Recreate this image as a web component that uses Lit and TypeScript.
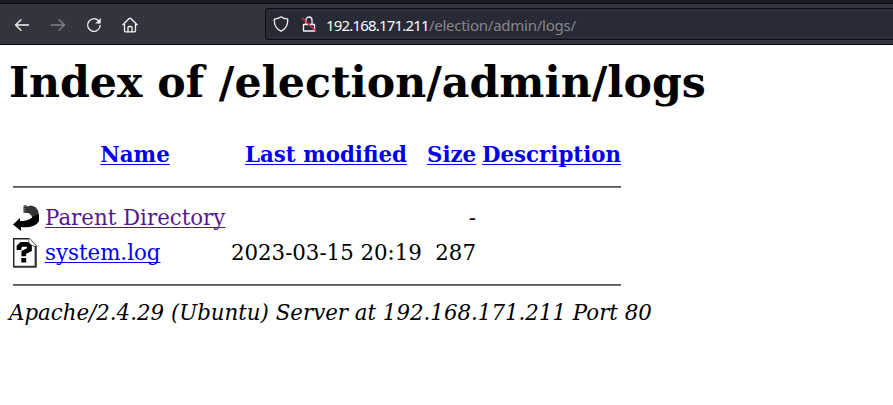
import { LitElement, html, css, svg } from "lit";
import { customElement } from "lit/decorators.js";

@customElement("browser-toolbar")
class BrowserToolbar extends LitElement {
  static styles = css`
    :host { display: block; }
    .tabs { height: 3px; background: #1a1b20; border-bottom: 1px solid #0c0d10; }
    .bar { height: 40px; display: flex; align-items: center; background: #33353d; border-bottom: 1px solid #0c0d10; }
    .nav { display: flex; gap: 20px; padding: 1px 0 0 14px; width: 265px; box-sizing: border-box; flex: none; }
    svg { display: block; flex: none; width: 16px; height: 16px; fill: none; stroke: #f4f4f6; stroke-width: 1.3; stroke-linecap: round; stroke-linejoin: round; }
    .dim { opacity: 0.4; }
    .url { flex: 1; height: 30px; display: flex; align-items: center; background: #282a35; border: 1px solid #0c0d10; border-right: 0; border-radius: 4px 0 0 4px; color: #85868e; font: 15px/28px "Noto Sans", sans-serif; letter-spacing: -0.25px; padding-left: 7px; }
    .lock { margin: 0 9px 0 12px; }
    b { font-weight: 400; color: #fbfbfe; letter-spacing: -0.81px; }
    .text { white-space: nowrap; padding-top: 2px; }
  `;
  render() {
    return html`
      <div class="tabs"></div>
      <div class="bar">
        <div class="nav">
          <svg viewBox="0 0 16 16"><path d="M14.5 8H1.5M7 2.8L1.5 8L7 13.2" /></svg>
          <svg class="dim" viewBox="0 0 16 16"><path d="M1.5 8H14.5M9 2.8L14.5 8L9 13.2" /></svg>
          <svg viewBox="0 0 16 16"><path d="M12.3 3.5A6.3 6.3 0 1 0 14.2 8.5" /><path d="M14.5 1.8V6.2H10.1Z" fill="#f4f4f6" stroke-width=".5" /></svg>
          <svg viewBox="0 0 16 16"><path d="M.9 7.8L7.2 1.5Q8 .8 8.8 1.5L15.1 7.8M2.5 7V13.8Q2.5 14.8 3.5 14.8H12.5Q13.5 14.8 13.5 13.8V7M6 14.5V10.5Q6 9.5 7 9.5H9Q10 9.5 10 10.5V14.5" /></svg>
        </div>
        <div class="url">
          <svg viewBox="0 0 16 16"><path d="M8 .8C6 2.3 4 2.9 1.3 3.2C1 8.5 3 13 8 15.2C13 13 15 8.5 14.7 3.2C12 2.9 10 2.3 8 .8Z" /></svg>
          <svg class="lock" viewBox="0 0 16 16"><path d="M2.5 8.5H13.5V15H2.5ZM5 8V4A3 3 0 0 1 11 4V8" /><path d="M1.5 2.5L14.8 15" stroke="#e22850" stroke-width="1.5" /></svg>
          <span class="text"><b>192.168.171.211</b>/election/admin/logs/</span>
        </div>
      </div>
    `;
  }
}

const backIcon = svg`<svg class="icon" viewBox="0 0 27 30"><path d="M10.5 .8L13 0L14 1.5L18 .5L22.5 2L25 5.5L26 10L20 14L18 10L15.5 8H10.5Z" fill="#333"/><path d="M12 1V8" stroke="#999" stroke-dasharray="1 1"/><path d="M26 9V16C23 21.5 16 22.8 8 22V26L0 19.5L7 13V16C14 16 18 14 20 11.5Z"/></svg>`;
const unknownIcon = svg`<svg class="icon" viewBox="0 0 27 30"><path d="M.7 .7H16L23 8V28.8H.7Z" fill="#fff" stroke="#222" stroke-width="1.4"/><path d="M15.5 .7H17L23 7.5V9L16 6Z" fill="#fff" stroke="#555" stroke-width=".8"/><path d="M22.4 8V28.5M1 28.6H23" fill="none" stroke="#333" stroke-width="1.6"/><path d="M6 12V8.8L8.5 6.3H14L16.5 8.5V11.5L10.8 14.5V18.3" fill="none" stroke="#000" stroke-width="4.7"/><path d="M8.3 20H13.2V24.5H8.3Z"/></svg>`;

@customElement("app-root")
class AppRoot extends LitElement {
  static styles = css`
    :host { display: block; height: 405px; overflow: hidden; background: #fff; color: #000; font: 21.33px/25px "DejaVu Serif", serif; }
    main { padding-left: 9px; }
    h1 { margin: 12px 0 0; font-size: 42.67px; line-height: 50px; font-weight: 700; white-space: nowrap; }
    .list { margin: 35px 0 0 4px; width: 608px; display: grid; grid-template-columns: 32px 186px 196px 55px 139px; grid-template-rows: 27px 36px 33px 46px 16px; white-space: nowrap; }
    .head { font-weight: 700; text-align: center; }
    .cell { padding-right: 6px; }
    .date { letter-spacing: -0.03px; }
    .low { padding-top: 2px; }
    .right { text-align: right; }
    .rule { grid-column: 1 / -1; height: 1px; background: #555753; border-bottom: 1px solid #7b7b7b; }
    .first { margin-top: 17px; }
    a { color: #0000ee; text-decoration: underline; text-decoration-thickness: 1px; text-underline-offset: 2px; text-decoration-skip-ink: none; }
    .visited { color: #551a8b; }
    .icon { display: block; width: 27px; height: 30px; }
    address { font-style: italic; white-space: nowrap; }
  `;
  render() {
    return html`
      <browser-toolbar></browser-toolbar>
      <main>
        <h1>Index of /election/admin/logs</h1>
        <div class="list">
          <span></span>
          <span class="head cell"><a>Name</a></span>
          <span class="head cell"><a>Last modified</a></span>
          <span class="head cell"><a>Size</a></span>
          <span class="head"><a>Description</a></span>
          <div class="rule first"></div>
          <span>${backIcon}</span>
          <span class="cell"><a class="visited">Parent Directory</a></span>
          <span></span>
          <span class="cell right">-</span>
          <span></span>
          <span>${unknownIcon}</span>
          <span class="cell low"><a>system.log</a></span>
          <span class="cell low date">2023-03-15 20:19</span>
          <span class="cell low right">287</span>
          <span></span>
          <div class="rule"></div>
        </div>
        <address>Apache/2.4.29 (Ubuntu) Server at 192.168.171.211 Port 80</address>
      </main>
    `;
  }
}
